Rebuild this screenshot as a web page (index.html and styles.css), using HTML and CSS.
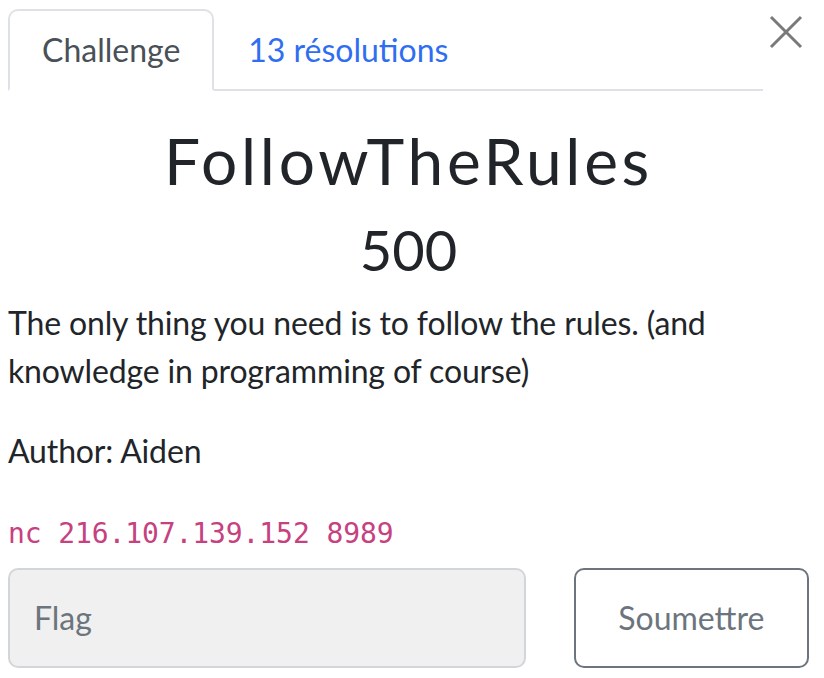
FILE: index.html
```html
<!DOCTYPE html>
<html lang="fr">
<head>
<meta charset="utf-8">
<title>FollowTheRules</title>
<link rel="stylesheet" href="styles.css">
</head>
<body>
<div class="modal-body">
  <div class="header">
    <ul class="tabs">
      <li class="tab active">Challenge</li>
      <li class="tab"><a href="#" class="tab-link">13 résolutions</a></li>
    </ul>
    <button class="close" aria-label="Close">
      <svg width="34" height="34" viewBox="0 0 34 34"><path d="M2 2 L32 32 M32 2 L2 32" stroke="#7a7a7a" stroke-width="3" fill="none"/></svg>
    </button>
  </div>
  <h2 class="name">FollowTheRules</h2>
  <h3 class="value">500</h3>
  <div class="desc">
    <p>The only thing you need is to follow the rules. (and knowledge in programming of course)</p>
    <p>Author: Aiden</p>
    <p class="last"><code>nc 216.107.139.152 8989</code></p>
  </div>
  <div class="submit-row">
    <input class="flag" type="text" placeholder="Flag">
    <button class="submit">Soumettre</button>
  </div>
</div>
</body>
</html>
```
FILE: styles.css
```css
html, body {
  margin: 0;
  padding: 0;
  background: #fff;
}
body {
  font-family: Lato, "Noto Sans", sans-serif;
  font-size: 32px;
  line-height: 1.5;
  color: #212529;
}
.modal-body {
  width: 801px;
  margin-left: 8px;
  padding-top: 9px;
}
.header {
  display: flex;
  align-items: flex-start;
}
.tabs {
  list-style: none;
  margin: 0;
  padding: 0;
  display: flex;
  width: 755px;
  border-bottom: 2px solid #dee2e6;
}
.tab {
  padding: 15px 32px;
  border: 2px solid transparent;
  border-top-left-radius: 10px;
  border-top-right-radius: 10px;
  margin-bottom: -2px;
  line-height: 48px;
}
.tab.active {
  color: #495057;
  border-color: #dee2e6 #dee2e6 #fff;
  background: #fff;
}
.tab-link {
  color: #2f6ef0;
  text-decoration: none;
}
.close {
  margin: 6px 0 0 6px;
  padding: 0;
  border: 0;
  background: none;
  width: 34px;
  height: 34px;
  display: block;
}
.close svg { display: block; }
.name {
  margin: 0 0 16px;
  padding-top: 32px;
  text-align: center;
  font-size: 64px;
  font-weight: 400;
  line-height: 1.2;
  letter-spacing: 3.7px;
}
.value {
  margin: 0 0 16px;
  text-align: center;
  font-size: 56px;
  font-weight: 400;
  line-height: 1.2;
}
.desc p {
  margin: 0 0 32px;
  letter-spacing: -0.15px;
}
.desc p.last {
  margin-bottom: 13px;
}
code {
  font-family: "DejaVu Sans Mono", monospace;
  font-size: 28px;
  letter-spacing: -0.1px;
  color: #c6417f;
}
.submit-row {
  display: flex;
  gap: 48px;
}
.flag {
  box-sizing: border-box;
  width: 519px;
  height: 100px;
  padding: 24px 24px;
  border: 2px solid #d3d6d9;
  border-radius: 10px;
  background: #f0f0f0;
  font-family: Lato, "Noto Sans", sans-serif;
  font-size: 32px;
  color: #495057;
  outline: none;
}
.flag::placeholder {
  color: #6c757d;
  opacity: 1;
}
.submit {
  box-sizing: border-box;
  width: 236px;
  height: 100px;
  border: 2px solid #6c757d;
  border-radius: 10px;
  background: #fff;
  color: #6c757d;
  font-family: Lato, "Noto Sans", sans-serif;
  font-size: 32px;
  padding: 0;
}
```
